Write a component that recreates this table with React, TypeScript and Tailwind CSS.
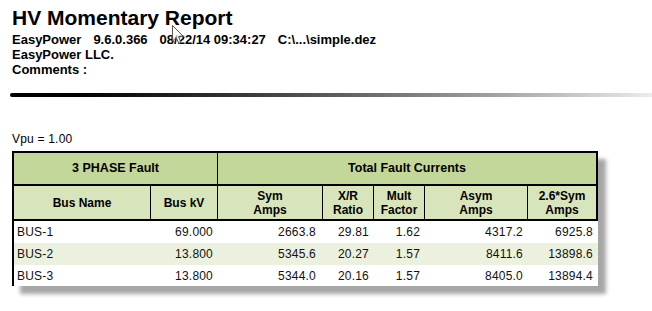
import React from 'react';

const rows = [
  { bus: 'BUS-1', kv: '69.000', sym: '2663.8', xr: '29.81', mult: '1.62', asym: '4317.2', sym26: '6925.8', stripe: false, h: 'h-[22px]' },
  { bus: 'BUS-2', kv: '13.800', sym: '5345.6', xr: '20.27', mult: '1.57', asym: '8411.6', sym26: '13898.6', stripe: true, h: 'h-[22px]' },
  { bus: 'BUS-3', kv: '13.800', sym: '5344.0', xr: '20.16', mult: '1.57', asym: '8405.0', sym26: '13894.4', stripe: false, h: 'h-[21px]' },
];

const HeadCell: React.FC<{ w: string; last?: boolean; children: React.ReactNode }> = ({ w, last, children }) => (
  <div
    className={`${w} ${last ? '' : 'border-r border-black'} flex flex-col items-center justify-center text-center leading-[14px]`}
  >
    {children}
  </div>
);

export default function App() {
  return (
    <div
      className="relative min-h-[311px] w-[652px] bg-white text-black"
      style={{ fontFamily: '"Liberation Sans", Arial, sans-serif' }}
    >
      {/* Report header */}
      <div className="pl-[12px] pt-[6px]">
        <h1 className="text-[21px] font-bold leading-[24px]">HV Momentary Report</h1>
        <div className="mt-[2px] flex gap-[12px] text-[13px] font-bold leading-[15px]">
          <span>EasyPower</span>
          <span>9.6.0.366</span>
          <span>08/22/14 09:34:27</span>
          <span>C:\...\simple.dez</span>
        </div>
        <div className="text-[13px] font-bold leading-[15px]">EasyPower LLC.</div>
        <div className="text-[13px] font-bold leading-[15px]">Comments :</div>
      </div>

      {/* Gradient rule */}
      <div className="ml-[10px] mt-[16px] h-[4px] rounded-l-full bg-gradient-to-r from-[#000000] to-[#ececec]" />

      <div className="mt-[35px] pl-[12px] text-[12px] leading-[14px] tracking-[0.2px]">Vpu = 1.00</div>

      {/* Table */}
      <div className="ml-[12px] mt-[5px] w-[586px] bg-white shadow-[8px_8px_4px_rgba(0,0,0,0.35)]">
        <div className="border-2 border-black font-bold">
          <div className="flex h-[33px] border-b-2 border-black bg-[#c4d79b] text-[12.5px]">
            <div className="flex w-[204px] items-center justify-center border-r border-black">3 PHASE Fault</div>
            <div className="flex flex-1 items-center justify-center">Total Fault Currents</div>
          </div>
          <div className="flex h-[33px] bg-[#d8e4bc] text-[12px]">
            <HeadCell w="w-[137px]">Bus Name</HeadCell>
            <HeadCell w="w-[67px]">Bus kV</HeadCell>
            <HeadCell w="w-[105px]">
              <span>Sym</span>
              <span>Amps</span>
            </HeadCell>
            <HeadCell w="w-[51px]">
              <span>X/R</span>
              <span>Ratio</span>
            </HeadCell>
            <HeadCell w="w-[51px]">
              <span>Mult</span>
              <span>Factor</span>
            </HeadCell>
            <HeadCell w="w-[103px]">
              <span>Asym</span>
              <span>Amps</span>
            </HeadCell>
            <HeadCell w="flex-1" last>
              <span>2.6*Sym</span>
              <span>Amps</span>
            </HeadCell>
          </div>
        </div>
        <div className="border-l-2 border-black text-[12px] tracking-[0.2px] text-[#111111]">
          {rows.map(r => (
            <div key={r.bus} className={`flex items-center ${r.h} ${r.stripe ? 'bg-[#ebf1de]' : ''}`}>
              <div className="w-[137px] pl-[3px]">{r.bus}</div>
              <div className="w-[67px] pr-[5px] text-right">{r.kv}</div>
              <div className="w-[105px] pr-[7px] text-right">{r.sym}</div>
              <div className="w-[51px] pr-[5px] text-right">{r.xr}</div>
              <div className="w-[51px] pr-[5px] text-right">{r.mult}</div>
              <div className="w-[103px] pr-[5px] text-right">{r.asym}</div>
              <div className="flex-1 pr-[5px] text-right">{r.sym26}</div>
            </div>
          ))}
        </div>
      </div>

      {/* Mouse pointer over the header */}
      <svg className="absolute left-[172px] top-[25px]" width="13" height="20" viewBox="0 0 13 20">
        <path d="M0.5 0.5 L0.5 16 L4.2 12.4 L6.8 18.5 L9 17.6 L6.5 11.6 L11.5 11.6 Z" fill="#ffffff" fillOpacity="0.7" stroke="#555555" strokeWidth="1" />
      </svg>
    </div>
  );
}
